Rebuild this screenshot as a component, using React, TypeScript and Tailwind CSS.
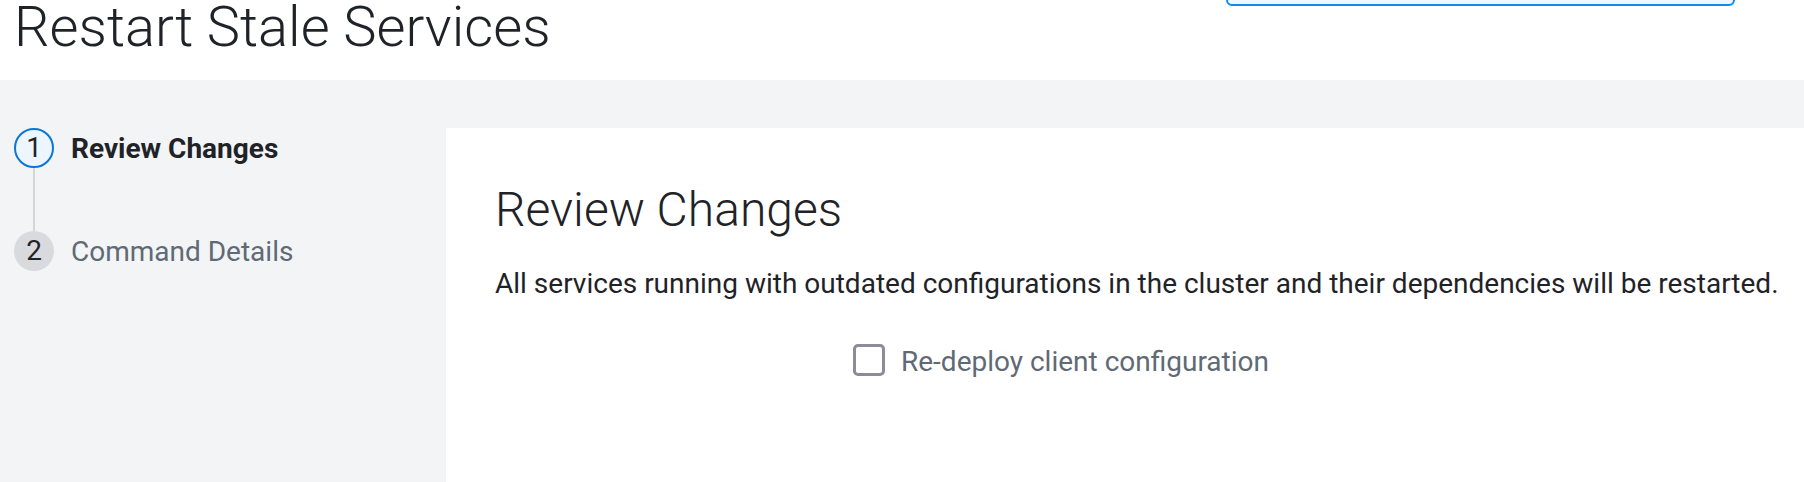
import React from 'react'

function Stepper() {
  const steps = [
    { id: 1, name: 'Review Changes', active: true },
    { id: 2, name: 'Command Details', active: false },
  ]
  return (
    <div className="flex flex-col">
      {steps.map((step, i) => (
        <div key={step.id} className="flex flex-col">
          <div className="flex items-center gap-[17px]">
            <div
              className={
                step.active
                  ? 'w-10 h-10 rounded-full border-2 border-[#0a76d8] bg-[#edf6ff] flex items-center justify-center text-[28px] leading-none text-[#1f2328]'
                  : 'w-10 h-10 rounded-full bg-[#d9dadd] flex items-center justify-center text-[28px] leading-none text-[#1f2328]'
              }
            >
              {step.id}
            </div>
            <span
              className={
                step.active
                  ? 'mt-[2px] text-[28px] leading-[36px] font-bold text-[#1f2328]'
                  : 'mt-[2px] text-[28px] leading-[36px] text-[#5f6a75]'
              }
            >
              {step.name}
            </span>
          </div>
          {i < steps.length - 1 && (
            <div className="ml-[19px] w-[2px] h-[63px] bg-[#d4d5d8]" />
          )}
        </div>
      ))}
    </div>
  )
}

export default function App() {
  return (
    <div className="w-[1804px] h-[482px] overflow-hidden bg-white font-['Roboto',sans-serif]">
      {/* Header */}
      <div className="h-[80px] flex items-start justify-between bg-white">
        <h1 className="ml-[14px] -mt-[1px] text-[56px] font-light leading-none text-[#1f2328]">
          Restart Stale Services
        </h1>
        <div className="mr-[69px] -mt-[34px] w-[509px] h-[40px] rounded-[6px] border-2 border-[#0a8cf0] bg-[#eef7ff]" />
      </div>

      {/* Body */}
      <div className="flex h-[402px] bg-[#f3f4f6]">
        <div className="w-[446px] shrink-0 pt-[48px] pl-[14px]">
          <Stepper />
        </div>
        <div className="flex-1 mt-[48px] bg-white pl-[49px] pt-[58px]">
          <h2 className="text-[48px] font-light leading-none text-[#1f2328]">Review Changes</h2>
          <p className="mt-[30px] text-[28px] leading-[40px] text-[#1f2328]">
            All services running with outdated configurations in the cluster and their dependencies will be restarted.
          </p>
          <label className="mt-[40px] ml-[358px] flex items-start gap-[16px]">
            <span className="w-[32px] h-[32px] rounded-[5px] border-[3px] border-[#8d8b99] bg-white" />
            <span className="mt-[2px] text-[28px] leading-[32px] text-[#5f6a75]">Re-deploy client configuration</span>
          </label>
        </div>
      </div>
    </div>
  )
}
